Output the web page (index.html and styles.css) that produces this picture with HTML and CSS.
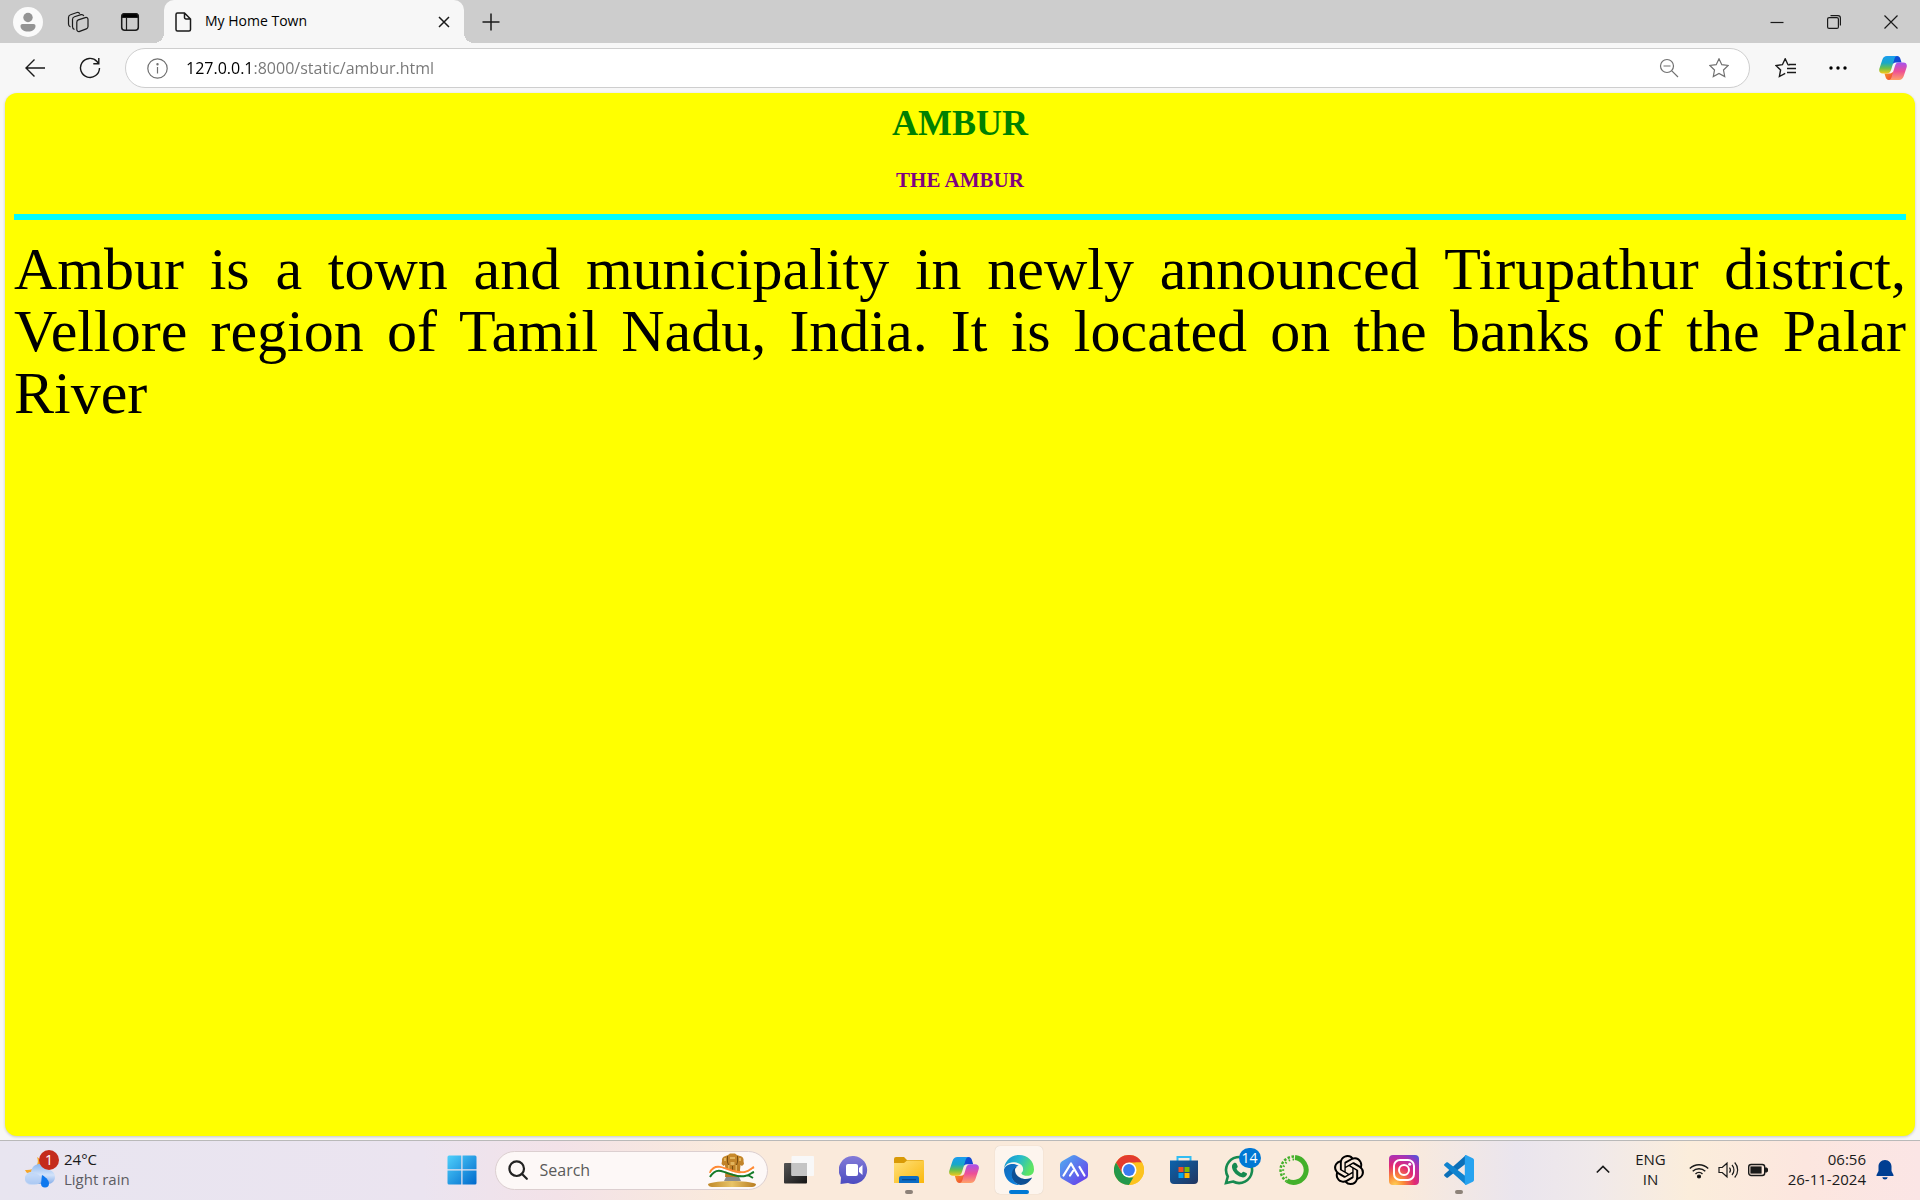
FILE: index.html
```html
<!DOCTYPE html>
<html lang="en">
<head>
<meta charset="utf-8">
<meta name="viewport" content="width=device-width, initial-scale=1">
<title>My Home Town</title>
<link rel="stylesheet" href="styles.css">
</head>
<body>
<svg class="defs" width="0" height="0" aria-hidden="true">
  <defs>
    <linearGradient id="cpA" x1="0" y1="0" x2="0" y2="1"><stop offset="0" stop-color="#1b9cf0"/><stop offset=".4" stop-color="#18a8c8"/><stop offset=".7" stop-color="#6cc04a"/><stop offset="1" stop-color="#f4c81a"/></linearGradient>
    <linearGradient id="cpB" x1="0" y1="0" x2="0" y2="1"><stop offset="0" stop-color="#a652ee"/><stop offset=".5" stop-color="#ee4f96"/><stop offset="1" stop-color="#ffa268"/></linearGradient>
    <linearGradient id="cpC" x1="0" y1="0" x2="1" y2="1"><stop offset="0" stop-color="#0a55d8"/><stop offset="1" stop-color="#1a3fd0"/></linearGradient>
    <linearGradient id="cpD" x1="0" y1="0" x2="1" y2="1"><stop offset="0" stop-color="#f8a020"/><stop offset="1" stop-color="#ee4038"/></linearGradient>
    <symbol id="copilot" viewBox="0 0 30 28">
      <path fill="url(#cpC)" d="M16 1h3.500c2 0 3 1.500 3.500 3.200l1.200 4H18c-2 0-3 1-3.600 3z"/>
      <path fill="url(#cpD)" d="M14 27h-3.500c-2 0-3-1.500-3.500-3.200l-1.200-4H12c2 0 3-1 3.600-3z"/>
      <path fill="url(#cpA)" d="M8.500 1H20c-2 0-2.900 1.300-3.500 3.300L13 16c-.8 2.600-2 3.800-4.500 3.800H4c-3 0-4.500-2-3.700-5L3.500 5C4.400 2.400 6 1 8.500 1z"/>
      <path fill="url(#cpB)" d="M21.500 27H10c2 0 2.900-1.300 3.500-3.300L17 12c.8-2.600 2-3.800 4.500-3.800H26c3 0 4.500 2 3.700 5L26.500 23c-.9 2.600-2.500 4-5 4z"/>
    </symbol>
    <linearGradient id="winG" x1="0" y1="0" x2="1" y2="1"><stop offset="0" stop-color="#4fd0fb"/><stop offset="1" stop-color="#0069cc"/></linearGradient>
    <linearGradient id="darkG" x1="0" y1="0" x2="1" y2="1"><stop offset="0" stop-color="#555"/><stop offset="1" stop-color="#151515"/></linearGradient>
    <linearGradient id="chatG" x1="0" y1="0" x2="0" y2="1"><stop offset="0" stop-color="#837bd8"/><stop offset="1" stop-color="#4c4cc0"/></linearGradient>
    <linearGradient id="foldG" x1="0" y1="0" x2="1" y2="1"><stop offset="0" stop-color="#ffe07a"/><stop offset="1" stop-color="#fab80c"/></linearGradient>
    <linearGradient id="edgeTop" x1="0" y1="0" x2="1" y2=".4"><stop offset="0" stop-color="#158bd0"/><stop offset=".5" stop-color="#25b9cf"/><stop offset="1" stop-color="#5ee463"/></linearGradient>
    <linearGradient id="edgeL" x1="0" y1="0" x2=".5" y2="1"><stop offset="0" stop-color="#1469b8"/><stop offset="1" stop-color="#0b7fdc"/></linearGradient>
    <linearGradient id="aiG" x1="0" y1="0" x2="1" y2="1"><stop offset="0" stop-color="#4fb0f0"/><stop offset="1" stop-color="#6a35ea"/></linearGradient>
    <linearGradient id="storeG" x1="0" y1="0" x2="1" y2="1"><stop offset="0" stop-color="#0a63ad"/><stop offset="1" stop-color="#22355f"/></linearGradient>
    <radialGradient id="igG" cx=".2" cy="1" r="1.200"><stop offset="0" stop-color="#ffd056"/><stop offset=".25" stop-color="#fb8a38"/><stop offset=".55" stop-color="#e22a72"/><stop offset=".8" stop-color="#b030b0"/><stop offset="1" stop-color="#5b50d8"/></radialGradient>
    <linearGradient id="cloudG" x1="0" y1="0" x2="0" y2="1"><stop offset="0" stop-color="#8db8f0"/><stop offset=".55" stop-color="#d3e3fa"/><stop offset="1" stop-color="#86aeea"/></linearGradient>
    <linearGradient id="goldG" x1="0" y1="0" x2="0" y2="1"><stop offset="0" stop-color="#c88a2c"/><stop offset="1" stop-color="#b87a24"/></linearGradient>
    <linearGradient id="moundG" x1="0" y1="0" x2="1" y2="0"><stop offset="0" stop-color="#c08828"/><stop offset=".5" stop-color="#e8c468"/><stop offset="1" stop-color="#b87c20"/></linearGradient>
  </defs>
</svg>

<header class="tabstrip">
  <div class="strip-tools">
    <button class="icon-btn" type="button" aria-label="Profile"><svg width="30" height="30" viewBox="0 0 30 30"><circle cx="15" cy="15" r="15" fill="#fafafa"/><circle cx="15" cy="10.500" r="4.700" fill="#949494"/><path fill="#949494" d="M9.500 17h11c1.200 0 2 .8 2 2 0 3.500-3.200 5.500-7.500 5.500S7.500 22.500 7.500 19c0-1.200.8-2 2-2z"/></svg></button>
    <button class="icon-btn" type="button" aria-label="Workspaces"><svg class="line" width="22" height="22" viewBox="0 0 22 22"><path d="M11.300 8.900l7-2.300c1.500-.5 2.700.4 2.700 1.900v7c0 1.200-.6 2-1.700 2.400l-6.600 2.500c-1.500.6-2.900-.3-2.900-1.900v-7.200c0-1.200.5-2 1.500-2.400z"/><path d="M7.500 18.500C6 18 5.500 17 5.500 15.500V8.500c0-1.500.7-2.300 2-2.700L14 3.700c1.300-.3 2.300 0 2.800 1.200M3.500 16C2 15.500 1.500 14.500 1.500 13V6.500c0-1.500.7-2.300 2-2.700L10 1.500c1.300-.3 2.300.2 2.700 1.300"/></svg></button>
    <button class="icon-btn" type="button" aria-label="Tab actions menu"><svg class="line" width="20" height="20" viewBox="0 0 20 20"><rect x="1.700" y="1.700" width="16.600" height="16.600" rx="3" stroke-width="1.500"/><path fill="#000" d="M2 5.500V4c0-1.500 1-2.300 2.500-2.300h11c1.500 0 2.500.8 2.500 2.300v1.500z"/><path d="M6.500 6v12"/></svg></button>
  </div>
  <div class="tab">
    <svg class="line" width="18" height="20" viewBox="0 0 18 20" aria-hidden="true"><path stroke-width="1.500" d="M3.500 1h7l6 6v10.500a1.500 1.500 0 0 1-1.500 1.500H3.500A1.500 1.500 0 0 1 2 17.500v-15A1.500 1.500 0 0 1 3.500 1zM10.500 1v4.500A1.500 1.500 0 0 0 12 7h4.500"/></svg>
    <span class="tab-title">My Home Town</span>
    <button class="icon-btn" type="button" aria-label="Close tab"><svg class="line" width="12" height="12" viewBox="0 0 12 12"><path stroke-width="1.500" d="M1 1l10 10M11 1L1 11"/></svg></button>
  </div>
  <button class="icon-btn new-tab" type="button" aria-label="New tab"><svg class="line" width="18" height="18" viewBox="0 0 18 18"><path d="M9 .5v17M.5 9h17" stroke-width="1.500"/></svg></button>
  <div class="window-controls">
    <button class="icon-btn" type="button" aria-label="Minimize"><svg class="line" width="14" height="14" viewBox="0 0 14 14"><path d="M.5 7.500h13"/></svg></button>
    <button class="icon-btn" type="button" aria-label="Restore"><svg class="line" width="14" height="14" viewBox="0 0 14 14"><rect x=".6" y="2.600" width="10.800" height="10.800" rx="1.500"/><path d="M3.500.6H11c1.500 0 2.400 1 2.400 2.400v7.500"/></svg></button>
    <button class="icon-btn" type="button" aria-label="Close"><svg class="line" width="14" height="14" viewBox="0 0 14 14"><path d="M.5.5l13 13M13.500.5l-13 13"/></svg></button>
  </div>
</header>

<nav class="toolbar" aria-label="Browser toolbar">
  <button class="icon-btn" type="button" aria-label="Back"><svg class="line" width="20" height="20" viewBox="0 0 20 20"><path stroke-width="1.400" d="M20 10H1M9.500 1.500L1 10l8.500 8.500"/></svg></button>
  <button class="icon-btn" type="button" aria-label="Refresh"><svg class="line" width="22" height="22" viewBox="0 0 22 22"><path stroke-width="1.400" d="M20.500 11A9.500 9.500 0 1 1 18 4.500l1.500 2M19.800 1v5.700h-5.500"/></svg></button>
  <form class="address">
    <svg class="line grey" width="21" height="21" viewBox="0 0 21 21" aria-hidden="true"><circle cx="10.500" cy="10.500" r="9.700"/><path d="M10.500 9v6.500"/><circle cx="10.500" cy="6.200" r=".6"/></svg>
    <input class="url" type="text" aria-label="Address" value="127.0.0.1:8000/static/ambur.html">
    <button class="icon-btn" type="button" aria-label="Zoom out"><svg class="line grey" width="20" height="20" viewBox="0 0 20 20"><circle cx="8" cy="8" r="6.500"/><path d="M12.800 12.800L19 19M4.500 8h7"/></svg></button>
    <button class="icon-btn" type="button" aria-label="Add to favorites"><svg class="line grey" width="20" height="20" viewBox="0 0 20 20"><path d="M10 .8l2.800 5.900 6.400.8-4.700 4.500 1.200 6.500-5.700-3.100-5.700 3.100L5.500 12 .8 7.500l6.400-.8z"/></svg></button>
  </form>
  <div class="toolbar-end">
    <button class="icon-btn" type="button" aria-label="Favorites"><svg class="line" width="22" height="20" viewBox="0 0 22 20"><path stroke-width="1.400" d="M14.500 7L13 6.700 10.200.8 7.400 6.700 1 7.500 5.600 12l-1.200 6.500 5.800-3.100M12 10.500h9M12 14.500h9M14 6.500h7"/></svg></button>
    <button class="icon-btn" type="button" aria-label="Settings and more"><svg width="18" height="4" viewBox="0 0 18 4"><circle cx="2" cy="2" r="1.700"/><circle cx="9" cy="2" r="1.700"/><circle cx="16" cy="2" r="1.700"/></svg></button>
    <button class="icon-btn" type="button" aria-label="Copilot"><svg width="28" height="26"><use href="#copilot"/></svg></button>
  </div>
</nav>

<main class="page">
  <h1>AMBUR</h1>
  <h3>THE AMBUR</h3>
  <hr>
  <p>Ambur is a town and municipality in newly announced Tirupathur district, Vellore region of Tamil Nadu, India. It is located on the banks of the Palar River</p>
</main>

<footer class="taskbar">
  <button class="weather" type="button">
    <span class="weather-icon">
      <svg width="32" height="38" viewBox="0 0 32 38" aria-hidden="true"><path fill="#f6a62a" d="M13 6c3 7-2 14-12 13 2 5 9 7 14 3s5-13-2-16z"/><path fill="url(#cloudG)" d="M7 21c1-6 5-8 9-8 5 0 7 3 8 6 4 0 7 3 7 7s-3 7-7 7H8c-4 0-7-2-7-6s3-6 6-6z"/><path fill="#bcd4f6" opacity=".7" d="M8 22c4 0 9 2 9 6s-3 6-8 6-8-2-8-6 3-6 7-6z"/><path fill="#0f78ee" d="M18 24c5 3 7 6 7 8.500a4 4 0 0 1-8 0z"/></svg>
      <span class="alert">1</span>
    </span>
    <span class="stack"><span>24°C</span><span class="muted">Light rain</span></span>
  </button>

  <div class="apps">
    <button class="app start" type="button" aria-label="Start"><svg width="30" height="30" viewBox="0 0 30 30"><path fill="url(#winG)" d="M2 .5h12.300v13.800H.5V2A1.500 1.500 0 0 1 2 .5zM15.500.5H28A1.500 1.500 0 0 1 29.500 2v12.300h-14zM.5 15.500h13.800v14H2A1.500 1.500 0 0 1 .5 28zM15.500 15.500h14V28a1.500 1.500 0 0 1-1.500 1.500H15.500z"/></svg></button>
    <form class="search">
      <svg width="20" height="20" viewBox="0 0 20 20" fill="none" stroke="#222" stroke-width="2.200" aria-hidden="true"><circle cx="8.700" cy="8.700" r="7.300"/><path d="M13.800 13.800l5 5" stroke-linecap="round"/></svg>
      <input type="text" placeholder="Search" aria-label="Search">
      <svg width="48" height="34" viewBox="0 0 48 34" aria-hidden="true"><path fill="url(#moundG)" d="M0 31c8-4 40-4 48 0 0 2-2 3-4 3H4c-2 0-4-1-4-3z"/><path fill="#8c8c8c" d="M18 24h13l2 4H16z"/><path fill="url(#goldG)" d="M20 2l2-1.500h5L29 2l3 1c3 .5 4 3 3.500 5l.5 3-2 2-1.500-1-.5 5 1 7H17l.5-7-.5-5-1.500 1-2-2 .5-3c-.5-2 .5-4.500 3.500-5z"/><path fill="#e2b45c" d="M22 4h5v2h-5zM22.500 9h4v3h-4zM16 5h2v3h-2zM31 5h2v3h-2zM20 12h1.500v8H20zM27.500 12H29v8h-1.500z"/><path fill="none" stroke="#7a4d10" stroke-width="1" d="M19.500 3v6l1 3M29.500 3v6l-1 3M24.500 13v9"/><path fill="none" stroke="#ff8a35" stroke-width="2" d="M2 20c1-4 5-7 10-6 9 2 17 7 25 5 5-1 7-4 9-5"/><path fill="none" stroke="#fff" stroke-width="2" d="M2 22c3-4 6-7 11-6 8 2 16 7 24 5 5-1 7-4 9-4"/><path fill="none" stroke="#157a28" stroke-width="2" d="M2 24c3-5 7-7 11-6 8 2 16 7 24 5 5-1 6-3 9-4M40 22l5 3"/></svg>
    </form>
    <button class="app" type="button" aria-label="Task view"><svg width="30" height="30" viewBox="0 0 30 30"><rect y="8" width="23" height="20.500" rx="1" fill="url(#darkG)"/><rect x="7.500" y="1" width="22.500" height="20" rx="1" fill="#f8f8f8"/><path d="M7.500 8H23v13H8.500a1 1 0 0 1-1-1z" fill="#c4c4c4"/></svg></button>
    <button class="app" type="button" aria-label="Chat"><svg width="30" height="30" viewBox="0 0 30 30"><path fill="url(#chatG)" d="M15 1a14 14 0 1 1-6 27L1.500 29 2 22.500A14 14 0 0 1 15 1z"/><rect x="7" y="9" width="12" height="12" rx="2" fill="#fff"/><path fill="#fff" d="M20 13l3.500-3v10L20 17z"/></svg></button>
    <button class="app running" type="button" aria-label="File Explorer"><svg width="30" height="30" viewBox="0 0 30 30"><path fill="#d99a06" d="M0 4a2 2 0 0 1 2-2h8l3 3h15a2 2 0 0 1 2 2v5H0z"/><path fill="url(#foldG)" d="M0 8h10l3-2.500h17V28H0z"/><path fill="#0b6cc4" d="M5 28v-5a2 2 0 0 1 2-2h16a2 2 0 0 1 2 2v5z"/><path fill="#08498f" d="M8 24h14v1.300H8z"/></svg></button>
    <button class="app" type="button" aria-label="Copilot"><svg width="30" height="28"><use href="#copilot"/></svg></button>
    <button class="app active" type="button" aria-label="Microsoft Edge"><svg width="30" height="30" viewBox="0 0 24 24"><path fill="#0d4f94" d="M21.900 18.100c-.3.200-.7.300-1 .5-1.100.4-2.300.6-3.500.6-4.600 0-8.600-3.200-8.600-7.200 0-1.100.6-2.100 1.600-2.700C6.200 9.500 4.500 14 6 18c1.500 3.700 4.500 5.700 7 5.900 3.700.2 7-1.800 9.200-5.300.2-.4-.1-.6-.3-.5z"/><path fill="url(#edgeL)" d="M9.900 22.600A7.400 7.400 0 0 1 7.800 20.600C5.200 17 5.800 12 9.400 9.600c.4-.3 1.500-.8 2.300-.8C9.500 6.200 1.600 6.200 0 11.600c0 1.900.4 3.800 1.200 5.500A12 12 0 0 0 15.400 23.600c-1.900.6-3.800.1-5.500-1z"/><path fill="url(#edgeTop)" d="M14.300 13.900c-.1.100-.4.300-.4.700 0 .3.200.6.600.9 1.800 1.300 5.300 1.100 5.300 1.100A5.100 5.100 0 0 0 24 11.500C24 4.600 18.700 0 12.100 0 4.700 0 0 6 0 11.900 0 8.600 3.300 5.700 7.300 5.700c.3 0 3 0 5.100 1.300 1.900 1.100 2.900 2.400 2.900 4.300 0 1.500-.7 2.300-1 2.600z"/></svg></button>
    <button class="app" type="button" aria-label="AI assistant"><svg width="30" height="30" viewBox="0 0 30 30"><path fill="url(#aiG)" d="M13 .6a4 4 0 0 1 4 0l10 5.600a4 4 0 0 1 2 3.400v10.800a4 4 0 0 1-2 3.400l-10 5.600a4 4 0 0 1-4 0L3 23.800a4 4 0 0 1-2-3.400V9.600a4 4 0 0 1 2-3.400z"/><path fill="none" stroke="#fff" stroke-width="2.200" stroke-linecap="round" stroke-linejoin="round" d="M4.500 20.500l7.500-12 7 12M11 20.500l3-4.500M20.500 12l5 8.500"/></svg></button>
    <button class="app" type="button" aria-label="Google Chrome"><svg width="30" height="30" viewBox="0 0 30 30"><circle cx="15" cy="15" r="15" fill="#fcc31e"/><path fill="#e33b2e" d="M2 7.500A15 15 0 0 1 28 7.500H15L8.500 18.700z"/><path fill="#23984b" d="M2 7.500L8.500 18.800 15 22.500h6.500L15 30A15 15 0 0 1 2 7.500z"/><path fill="#fcc31e" d="M28 7.500A15 15 0 0 1 15 30l6.500-11.200V7.500z"/><circle cx="15" cy="15" r="7.500" fill="#fff"/><circle cx="15" cy="15" r="5.900" fill="#3a7af0"/></svg></button>
    <button class="app" type="button" aria-label="Microsoft Store"><svg width="30" height="30" viewBox="0 0 30 30"><path fill="none" stroke="#33bdf2" stroke-width="2" d="M8.500 6V2h13v4"/><path fill="url(#storeG)" d="M1 5.500h28V25a4 4 0 0 1-4 4H5a4 4 0 0 1-4-4z"/><path fill="#f25022" d="M9.500 12h5v5h-5z"/><path fill="#7fba00" d="M15.500 12h5v5h-5z"/><path fill="#00a4ef" d="M9.500 18h5v5h-5z"/><path fill="#ffb900" d="M15.500 18h5v5h-5z"/></svg></button>
    <button class="app" type="button" aria-label="WhatsApp, 14 unread"><svg width="30" height="30" viewBox="0 0 30 30"><path fill="none" stroke="#178a50" stroke-width="2.600" d="M2 28l1.800-6.500A13 13 0 1 1 9 26.500z"/><path fill="#178a50" d="M10 8c1-.6 2-.4 2.500.6l1.200 2.600c.3.800-1.200 2-1.200 2.600 1 2 2.600 3.400 4.600 4.400.8.200 1.500-1.800 2.400-1.500l2.800 1.400c.8.400.8 1.200.4 2-1 2-3.200 2.800-5.400 2C12.500 20.600 9 17 8 12.500 7.700 10.500 8.600 8.700 10 8z"/></svg><span class="badge">14</span></button>
    <button class="app" type="button" aria-label="Anaconda"><svg width="30" height="30" viewBox="0 0 30 30" fill="none" stroke="#43b02a"><path stroke-width="5" d="M16 2.500A12.500 12.500 0 1 1 8 25.500"/><path stroke-width="2.500" stroke-dasharray="2.500 1.600" d="M15 1.500A13.500 13.500 0 0 0 7.500 26.200"/><path stroke-width="2" stroke-dasharray="1.500 2.500" d="M15 4.500A10.500 10.500 0 0 0 8.500 23.500"/></svg></button>
    <button class="app" type="button" aria-label="ChatGPT"><svg width="30" height="30" viewBox="0 0 24 24"><path d="M22.282 9.821a5.985 5.985 0 0 0-.516-4.911 6.046 6.046 0 0 0-6.510-2.900A6.065 6.065 0 0 0 4.981 4.182a5.985 5.985 0 0 0-3.998 2.900 6.046 6.046 0 0 0 .743 7.097 5.980 5.980 0 0 0 .511 4.911 6.051 6.051 0 0 0 6.515 2.900A5.985 5.985 0 0 0 13.260 24a6.056 6.056 0 0 0 5.772-4.206 5.990 5.990 0 0 0 3.998-2.900 6.056 6.056 0 0 0-.747-7.073zM13.260 22.430a4.476 4.476 0 0 1-2.876-1.041l.141-.080 4.779-2.758a.795.795 0 0 0 .393-.681v-6.737l2.020 1.169a.071.071 0 0 1 .038.052v5.583a4.504 4.504 0 0 1-4.495 4.493zM3.600 18.304a4.471 4.471 0 0 1-.535-3.014l.142.085 4.783 2.759a.771.771 0 0 0 .780 0l5.843-3.369v2.332a.080.080 0 0 1-.033.062L9.740 19.950a4.500 4.500 0 0 1-6.140-1.646zM2.341 7.896a4.485 4.485 0 0 1 2.366-1.973V11.600a.766.766 0 0 0 .388.677l5.815 3.354-2.020 1.169a.076.076 0 0 1-.071 0l-4.830-2.787A4.504 4.504 0 0 1 2.341 7.872zm16.596 3.856l-5.833-3.387L15.119 7.200a.076.076 0 0 1 .071 0l4.830 2.791a4.494 4.494 0 0 1-.677 8.105v-5.678a.790.790 0 0 0-.406-.666zm2.010-3.023l-.141-.085-4.774-2.782a.776.776 0 0 0-.785 0L9.409 9.230V6.897a.066.066 0 0 1 .028-.061l4.830-2.787a4.499 4.499 0 0 1 6.680 4.660zM8.307 12.863l-2.020-1.164a.080.080 0 0 1-.038-.057V6.074a4.499 4.499 0 0 1 7.376-3.453l-.142.080-4.778 2.758a.795.795 0 0 0-.393.682zm1.097-2.366L12.006 9l2.607 1.500v2.999l-2.597 1.500-2.607-1.500z"/></svg></button>
    <button class="app" type="button" aria-label="Instagram"><svg width="30" height="30" viewBox="0 0 30 30"><rect width="30" height="30" rx="4" fill="url(#igG)"/><g fill="none" stroke="#fff" stroke-width="2"><rect x="5" y="5" width="20" height="20" rx="6"/><circle cx="15" cy="15" r="5"/></g><circle cx="20.700" cy="9.200" r="1.500" fill="#fff"/></svg></button>
    <button class="app running" type="button" aria-label="Visual Studio Code"><svg width="30" height="30" viewBox="0 0 30 30"><path fill="#0b6fb8" d="M22 0v8.500L4 22.500c-.6.500-1.200.5-1.700 0L.5 21c-.6-.6-.6-1.200 0-1.800z"/><path fill="#1083cf" d="M22 30v-8.500L4 7.500C3.400 7 2.800 7 2.300 7.500L.5 9c-.6.600-.6 1.200 0 1.800z"/><path fill="#27a3f0" d="M22 0l6.800 3.200c.8.400 1.200 1 1.200 1.800v20c0 .8-.4 1.400-1.200 1.800L22 30c-.8 0-1.200-.6-1.200-1.200V1.200C20.800.6 21.200 0 22 0z"/></svg></button>
  </div>

  <div class="tray">
    <button class="icon-btn" type="button" aria-label="Show hidden icons"><svg class="line" width="14" height="14" viewBox="0 0 14 14"><path stroke-width="1.700" d="M.8 9.500L7 3.500l6.200 6"/></svg></button>
    <button class="stack language" type="button"><span>ENG</span><span>IN</span></button>
    <button class="status" type="button" aria-label="Network, volume and battery">
      <svg class="line" width="20" height="18" viewBox="0 0 20 18"><path stroke-width="1.400" d="M.8 7.500a13 13 0 0 1 18.400 0M3.700 10.300a9 9 0 0 1 12.600 0M6.500 13a5 5 0 0 1 7 0"/><circle cx="10" cy="15.500" r="1.500" fill="#000"/></svg>
      <svg class="line" width="21" height="18" viewBox="0 0 21 18"><path d="M1 6.500h3.200L9 2.200v13.600l-4.800-4.300H1zM11.500 6.500a4 4 0 0 1 0 5M14 4a7.500 7.500 0 0 1 0 10M16.700 1.500a11 11 0 0 1 0 15"/></svg>
      <svg class="line" width="20" height="18" viewBox="0 0 20 18"><rect x=".7" y="3.500" width="16" height="11" rx="2.500" stroke-width="1.400"/><rect x="3" y="6" width="10" height="6" fill="#1a1a1a"/><path fill="#1a1a1a" d="M17.500 7h1l1 1v2l-1 1h-1z"/></svg>
    </button>
    <button class="stack clock" type="button"><span>06:56</span><span>26-11-2024</span></button>
    <button class="icon-btn bell" type="button" aria-label="Notifications"><svg width="18" height="20" viewBox="0 0 18 20" fill="#003e92"><path d="M9 0c4 0 6.500 3 6.500 6.500v4.500l2 4c.2.600 0 1-.7 1H1.200c-.7 0-.9-.4-.7-1l2-4V6.500C2.500 3 5 0 9 0zM6.300 17.200h5.400A2.700 2.700 0 0 1 9 19.500a2.700 2.700 0 0 1-2.700-2.300z"/></svg></button>
  </div>
</footer>
</body>
</html>
```
FILE: styles.css
```css
* {
  box-sizing: border-box;
}

body {
  margin: 0;
  min-height: 100vh;
  display: grid;
  grid-template-rows: auto auto 1fr auto;
  background: #f7f7f7;
  color: #1a1a1a;
  font-family: "Segoe UI", "Open Sans", sans-serif;
  font-size: 15px;
}

button {
  border: 0;
  padding: 0;
  background: none;
  color: inherit;
  font: inherit;
}

input {
  border: 0;
  padding: 0;
  outline: 0;
  background: none;
  font: inherit;
}

svg {
  display: block;
  flex: none;
}

.defs {
  position: absolute;
}

.line {
  fill: none;
  stroke: #1a1a1a;
  stroke-width: 1.2;
}

.grey {
  stroke: #707070;
}

.icon-btn {
  display: grid;
  place-items: center;
  flex: none;
}

/* Tab strip */
.tabstrip {
  display: flex;
  align-items: center;
  height: 43px;
  background: #cdcdcd;
}

.strip-tools {
  display: flex;
  align-items: center;
  width: 164px;
  padding-left: 13px;
}

.strip-tools .icon-btn {
  margin-right: 24px;
}

.strip-tools .icon-btn + .icon-btn {
  margin-right: 31px;
}

.strip-tools .icon-btn:last-child {
  margin-right: 0;
}

.tab {
  position: relative;
  display: flex;
  align-items: center;
  width: 300px;
  height: 43px;
  padding: 0 14px 0 10px;
  border-radius: 10px 10px 0 0;
  background: #f7f7f7;
}

.tab::before,
.tab::after {
  content: "";
  position: absolute;
  bottom: 0;
  width: 10px;
  height: 10px;
}

.tab::before {
  right: 100%;
  background: radial-gradient(circle at 0 0, #cdcdcd 10px, #f7f7f7 10px);
}

.tab::after {
  left: 100%;
  background: radial-gradient(circle at 100% 0, #cdcdcd 10px, #f7f7f7 10px);
}

.tab-title {
  flex: 1;
  padding: 0 0 2px 13px;
  color: #000;
  font-size: 14px;
  line-height: 20px;
}

.new-tab {
  margin-left: 18px;
}

.window-controls {
  display: flex;
  gap: 43px;
  margin-left: auto;
  padding-right: 22px;
}

/* Toolbar */
.toolbar {
  display: flex;
  align-items: center;
  height: 50px;
  padding: 0 13px 0 25px;
}

.toolbar > .icon-btn {
  margin-right: 34px;
}

.toolbar > .icon-btn + .icon-btn {
  margin-right: 24px;
}

.address {
  display: flex;
  align-items: center;
  flex: 1;
  height: 40px;
  padding: 0 20px 0 21px;
  border: 1px solid #cecece;
  border-radius: 20px;
  background: #fff;
}

.address .icon-btn {
  margin-left: 30px;
}

.url {
  flex: 1;
  min-width: 0;
  margin-left: 18px;
  font-size: 16px;
  line-height: 24px;
  color: transparent;
  background: linear-gradient(90deg, #000 67px, #767676 67px);
  background-clip: text;
}

.toolbar-end {
  display: flex;
  align-items: center;
  gap: 32px;
  padding-left: 25px;
}

/* Web page */
.page {
  margin: 0 5px 4px;
  padding: 10px 9px;
  border-radius: 12px;
  background: #ff0;
  box-shadow: 0 1px 3px #0003;
  font-family: "Liberation Serif", serif;
}

.page h1,
.page h3 {
  margin: 0;
  text-align: center;
}

.page h1 {
  color: green;
  font-size: 36px;
  line-height: 40px;
}

.page h3 {
  margin-top: 25px;
  color: purple;
  font-size: 21px;
  line-height: 24px;
}

.page hr {
  height: 6px;
  margin: 22px 0 18px;
  border: 0;
  background: #0ff;
}

.page p {
  margin: 0;
  color: #000;
  font-size: 60px;
  line-height: 62px;
  text-align: justify;
}

/* Taskbar */
.taskbar {
  display: grid;
  grid-template-columns: 1fr auto 1fr;
  align-items: center;
  height: 60px;
  padding-bottom: 1px;
  border-top: 1px solid #b9b9b9;
  background: linear-gradient(90deg, #e8e5f0 0%, #ebe4f0 22%, #f3e2e8 29%, #faeadb 38%, #faeadb 73%, #eae5ee 79%, #f0e9ea 83%, #fbeddb 88%, #fce6df 94%, #fbe5e5 100%);
}

.stack {
  display: flex;
  flex-direction: column;
  padding-bottom: 3px;
  line-height: 20px;
}

.muted {
  color: #5c5c62;
}

.weather {
  display: flex;
  align-items: center;
  gap: 8px;
  padding-left: 24px;
  text-align: left;
}

.weather-icon {
  position: relative;
}

.alert,
.badge {
  position: absolute;
  border-radius: 10px;
  color: #fff;
  line-height: 20px;
  text-align: center;
}

.alert {
  top: -1px;
  right: -3px;
  width: 20px;
  background: #c42b1c;
  font-size: 14px;
}

.badge {
  top: 2px;
  right: 2px;
  width: 22px;
  background: #0078d4;
  font-size: 14px;
}

.apps {
  display: flex;
  align-items: center;
  gap: 7px;
}

.app {
  position: relative;
  display: grid;
  place-items: center;
  width: 48px;
  height: 48px;
  border-radius: 5px;
}

.start {
  margin-right: 2px;
}

.active {
  background: #fdf5ee;
  box-shadow: 0 0 1px #0003;
}

.running::after,
.active::after {
  content: "";
  position: absolute;
  bottom: 0;
  left: 50%;
  width: 8px;
  height: 4px;
  margin-left: -4px;
  border-radius: 2px;
  background: #8d8279;
}

.active::after {
  width: 20px;
  margin-left: -10px;
  background: #0078d4;
}

.search {
  display: flex;
  align-items: center;
  gap: 12px;
  width: 273px;
  height: 39px;
  padding: 0 11px 0 12px;
  border: 1px solid #dccfd0;
  border-radius: 20px;
  background: #fdf8f7;
}

.search input {
  flex: 1;
  min-width: 0;
  font-size: 16px;
  line-height: 24px;
}

.search input::placeholder {
  color: #5a5a5a;
  opacity: 1;
}

.tray {
  display: flex;
  align-items: center;
  justify-content: flex-end;
  padding-right: 26px;
}

.language {
  align-items: center;
  margin-left: 25px;
}

.status {
  display: flex;
  gap: 9px;
  margin-left: 23px;
}

.clock {
  align-items: flex-end;
  margin-left: 20px;
}

.bell {
  margin-left: 10px;
}
```
